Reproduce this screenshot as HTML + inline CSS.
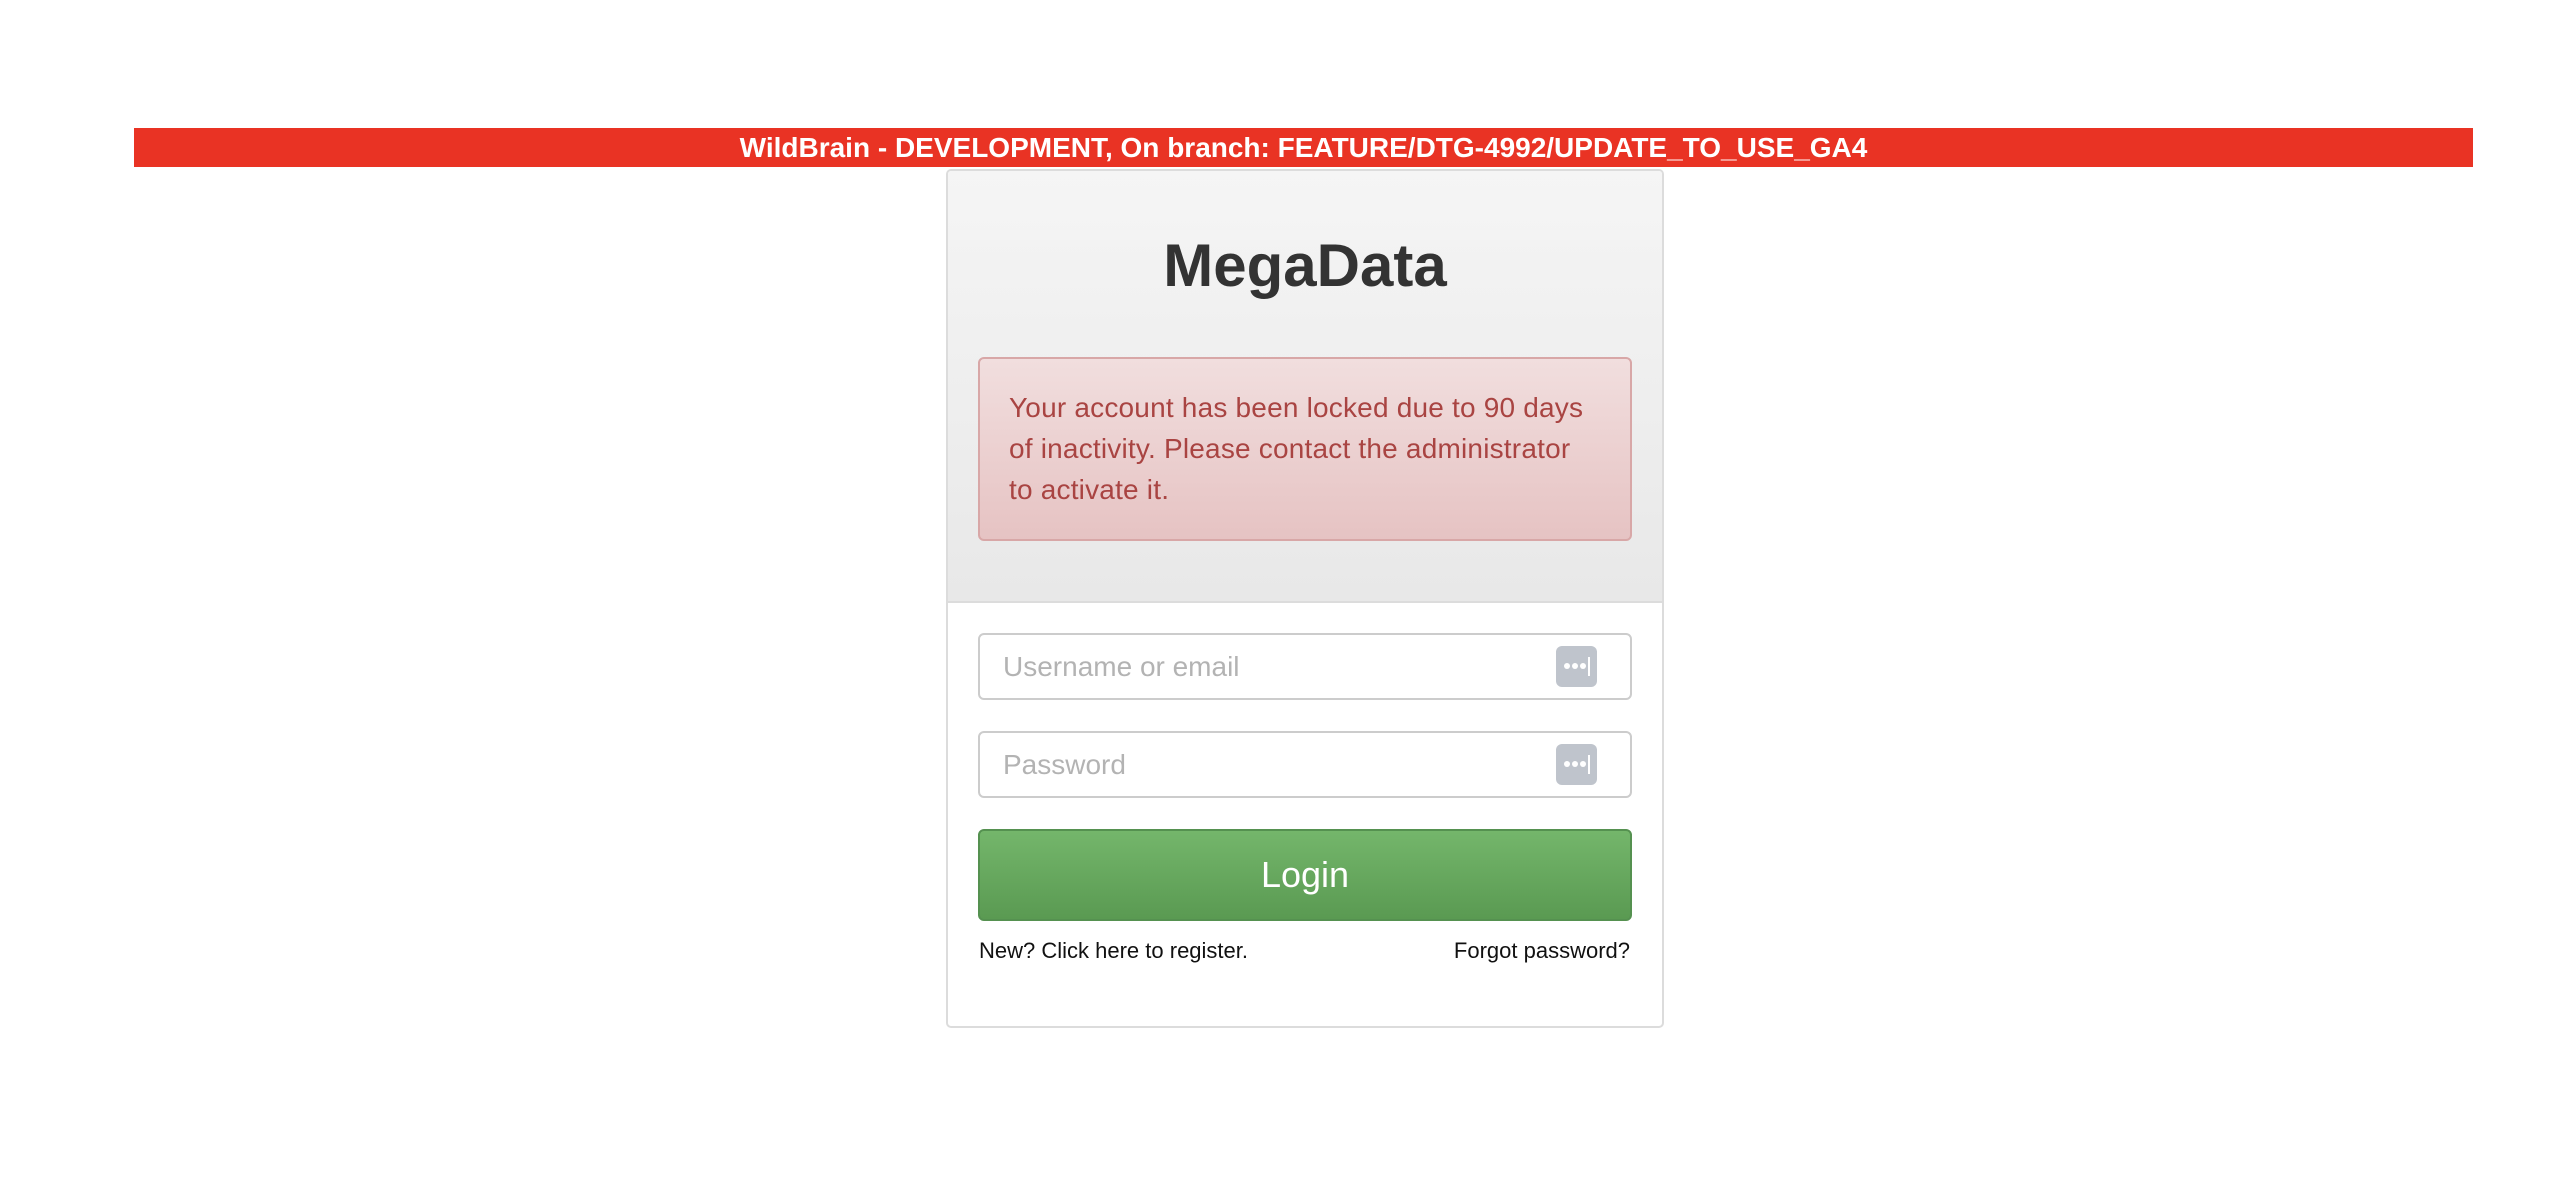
<!DOCTYPE html>
<html><head><meta charset="utf-8"><style>
*{box-sizing:border-box;margin:0;padding:0}
body{width:2570px;height:1204px;background:#fff;font-family:"Liberation Sans",Arial,sans-serif;position:relative;overflow:hidden}
.bar{position:absolute;left:134px;top:128px;width:2339px;height:39px;background:#e93324;color:#fff;font-weight:bold;font-size:28px;line-height:39px;text-align:center}
.card{position:absolute;left:946px;top:169px;width:718px;height:859px;border:2px solid #dcdcdc;border-radius:5px;background:#fff;overflow:hidden}
.head{height:432px;background:linear-gradient(#f5f5f5,#e8e8e8);border-bottom:2px solid #dcdcdc;position:relative}
.title{position:absolute;top:60px;width:100%;text-align:center;font-size:60px;font-weight:bold;color:#333;line-height:70px}
.alert{position:absolute;left:30px;top:186px;width:654px;height:184px;border:2px solid #d8a7a7;border-radius:6px;background:linear-gradient(#f1dede,#e6c3c3);color:#a94442;font-size:28px;letter-spacing:0.2px;line-height:41px;padding:28px 20px 0 29px;white-space:nowrap}
.inp{position:absolute;left:30px;width:654px;height:67px;border:2px solid #ccc;border-radius:6px;background:#fff;color:#b3b3b3;font-size:28px;line-height:63px;padding-left:23px}
.ic{position:absolute;right:33px;top:11px;width:41px;height:41px;border-radius:6px;background:#bfc4cc}
.ic i{position:absolute;top:17px;width:6px;height:6px;border-radius:3px;background:#fff}
.ic b{position:absolute;left:32px;top:11px;width:2px;height:19px;background:#fff}
.btn{position:absolute;left:30px;top:658px;width:654px;height:92px;border:2px solid #559150;border-radius:6px;background:linear-gradient(#74b66b,#5a9a52);color:#fff;font-size:36px;text-align:center;line-height:88px}
.lk{position:absolute;top:766px;font-size:22px;color:#111;line-height:28px}
</style></head><body>
<div class="bar">WildBrain - DEVELOPMENT, On branch: FEATURE/DTG-4992/UPDATE_TO_USE_GA4</div>
<div class="card">
 <div class="head">
  <div class="title">MegaData</div>
  <div class="alert">Your account has been locked due to 90 days<br>of inactivity. Please contact the administrator<br>to activate it.</div>
 </div>
 <div class="inp" style="top:462px">Username or email<div class="ic"><i style="left:8px"></i><i style="left:16px"></i><i style="left:24px"></i><b></b></div></div>
 <div class="inp" style="top:560px">Password<div class="ic"><i style="left:8px"></i><i style="left:16px"></i><i style="left:24px"></i><b></b></div></div>
 <div class="btn">Login</div>
 <div class="lk" style="left:31px">New? Click here to register.</div>
 <div class="lk" style="right:32px">Forgot password?</div>
</div>
</body></html>
